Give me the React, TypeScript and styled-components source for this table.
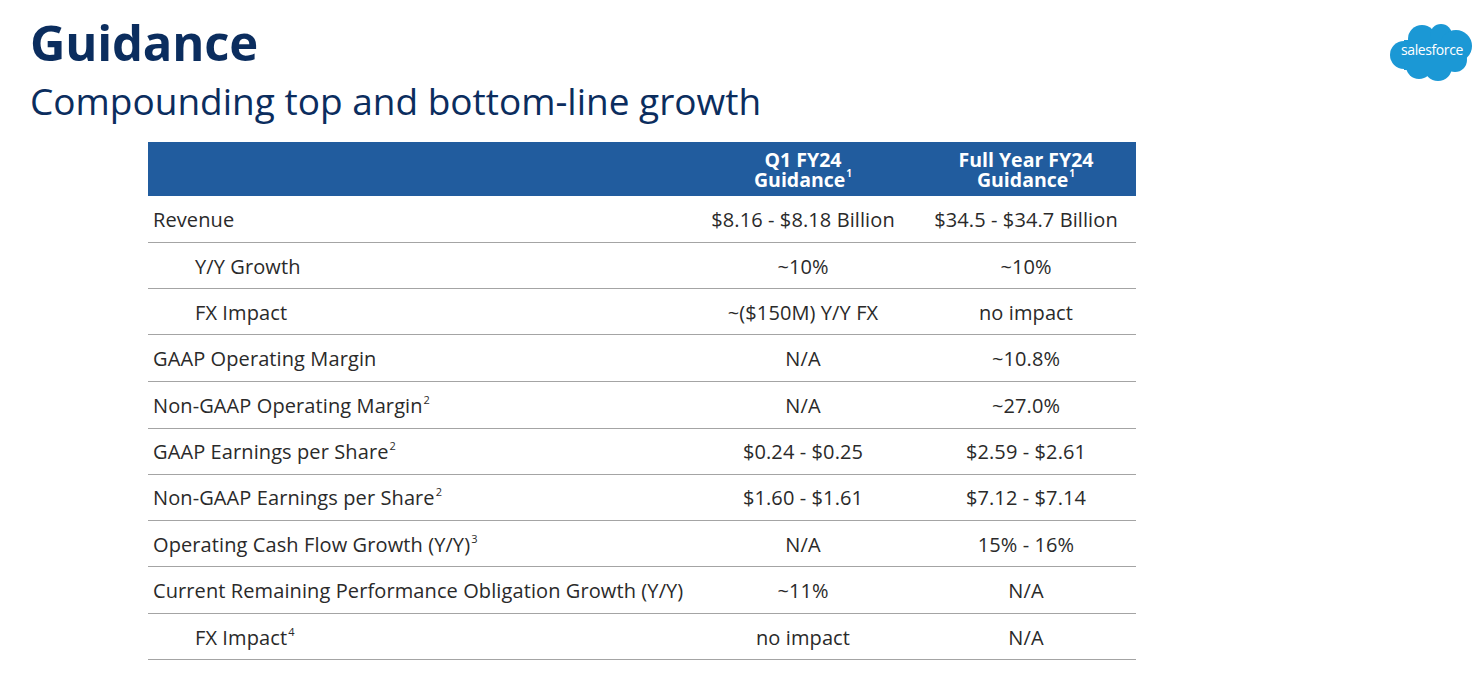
import React from 'react';
import styled, { createGlobalStyle } from 'styled-components';

const GlobalStyle = createGlobalStyle`
  html, body {
    margin: 0;
    padding: 0;
    background: #ffffff;
  }
  body {
    font-family: 'Open Sans', 'Noto Sans', sans-serif;
  }
`;

const Page = styled.div`
  width: 1479px;
  height: 678px;
  box-sizing: border-box;
  padding: 0 6px 0 30px;
  overflow: hidden;
`;

const TopBar = styled.div`
  display: flex;
  justify-content: space-between;
  align-items: flex-start;
`;

const Titles = styled.div`
  display: flex;
  flex-direction: column;
`;

const Title = styled.h1`
  margin: 0;
  padding-top: 9px;
  font-size: 49px;
  line-height: 66px;
  font-weight: 700;
  color: #0b2d5e;
  letter-spacing: -0.2px;
`;

const Subtitle = styled.h2`
  margin: 0;
  font-size: 37px;
  line-height: 52px;
  font-weight: 400;
  color: #0b2d5e;
`;

const Logo = styled.svg`
  margin-top: 22px;
  width: 84px;
  height: 60px;
  flex: none;
`;

const Table = styled.div`
  margin: 15px 0 0 118px;
  width: 988px;
  display: grid;
  grid-template-columns: 542px 226px 220px;
`;

const HeadCell = styled.div`
  height: 54px;
  background: #215c9e;
  color: #ffffff;
  font-weight: 700;
  font-size: 19.5px;
  line-height: 20px;
  display: flex;
  align-items: center;
  justify-content: center;
  text-align: center;
  padding-top: 2px;
  box-sizing: border-box;
`;

const Cell = styled.div<{ $indent?: boolean; $center?: boolean; $tall?: boolean }>`
  height: ${(p) => (p.$tall ? '47px' : '46.2px')};
  box-sizing: border-box;
  border-bottom: 1.5px solid #a4a4a4;
  display: flex;
  align-items: center;
  justify-content: ${(p) => (p.$center ? 'center' : 'flex-start')};
  padding-left: ${(p) => (p.$center ? '0' : p.$indent ? '42px' : '0')};
  padding-top: 1px;
  font-size: 20px;
  letter-spacing: 0.1px;
  color: #2a2a2a;
  white-space: nowrap;
`;

const LabelCell = styled(Cell)`
  padding-left: ${(p) => (p.$indent ? '47px' : '5px')};
`;

const Sup = styled.sup`
  font-size: 11px;
  line-height: 0;
  vertical-align: 0;
  position: relative;
  top: -9px;
  margin-left: 1px;
`;

const HeadSup = styled(Sup)`
  top: -10px;
  font-size: 10px;
`;

type Row = {
  label: string;
  note?: string;
  indent?: boolean;
  q1: string;
  fy: string;
};

const rows: Row[] = [
  { label: 'Revenue', q1: '$8.16 - $8.18 Billion', fy: '$34.5 - $34.7 Billion' },
  { label: 'Y/Y Growth', indent: true, q1: '~10%', fy: '~10%' },
  { label: 'FX Impact', indent: true, q1: '~($150M) Y/Y FX', fy: 'no impact' },
  { label: 'GAAP Operating Margin', q1: 'N/A', fy: '~10.8%' },
  { label: 'Non-GAAP Operating Margin', note: '2', q1: 'N/A', fy: '~27.0%' },
  { label: 'GAAP Earnings per Share', note: '2', q1: '$0.24 - $0.25', fy: '$2.59 - $2.61' },
  { label: 'Non-GAAP Earnings per Share', note: '2', q1: '$1.60 - $1.61', fy: '$7.12 - $7.14' },
  { label: 'Operating Cash Flow Growth (Y/Y)', note: '3', q1: 'N/A', fy: '15% - 16%' },
  { label: 'Current Remaining Performance Obligation Growth (Y/Y)', q1: '~11%', fy: 'N/A' },
  { label: 'FX Impact', note: '4', indent: true, q1: 'no impact', fy: 'N/A' },
];

const CloudLogo = () => (
  <Logo viewBox="0 0 84 60">
    <g fill="#1b98d5">
      <circle cx="33" cy="17" r="14" />
      <circle cx="52" cy="13" r="11" />
      <circle cx="67" cy="24" r="16" />
      <circle cx="15" cy="33" r="14" />
      <circle cx="30" cy="44" r="13" />
      <circle cx="49" cy="45" r="14" />
      <circle cx="66" cy="38" r="12" />
      <rect x="15" y="18" width="54" height="30" />
    </g>
    <text
      x="43"
      y="32.5"
      textAnchor="middle"
      fill="#ffffff"
      fontFamily="'Open Sans', sans-serif"
      fontSize="14"
      letterSpacing="-0.4"
    >
      salesforce
    </text>
  </Logo>
);

export default function App() {
  return (
    <Page>
      <GlobalStyle />
      <TopBar>
        <Titles>
          <Title>Guidance</Title>
          <Subtitle>Compounding top and bottom-line growth</Subtitle>
        </Titles>
        <CloudLogo />
      </TopBar>
      <Table>
        <HeadCell />
        <HeadCell>
          <div>
            Q1 FY24
            <br />
            Guidance<HeadSup>1</HeadSup>
          </div>
        </HeadCell>
        <HeadCell>
          <div>
            Full Year FY24
            <br />
            Guidance<HeadSup>1</HeadSup>
          </div>
        </HeadCell>
        {rows.map((r, i) => {
          const tall = i === 0 || i === 4 || i === 8;
          return (
            <React.Fragment key={i}>
              <LabelCell $indent={r.indent} $tall={tall}>
                <span>
                  {r.label}
                  {r.note && <Sup>{r.note}</Sup>}
                </span>
              </LabelCell>
              <Cell $center $tall={tall}>{r.q1}</Cell>
              <Cell $center $tall={tall}>{r.fy}</Cell>
            </React.Fragment>
          );
        })}
      </Table>
    </Page>
  );
}
